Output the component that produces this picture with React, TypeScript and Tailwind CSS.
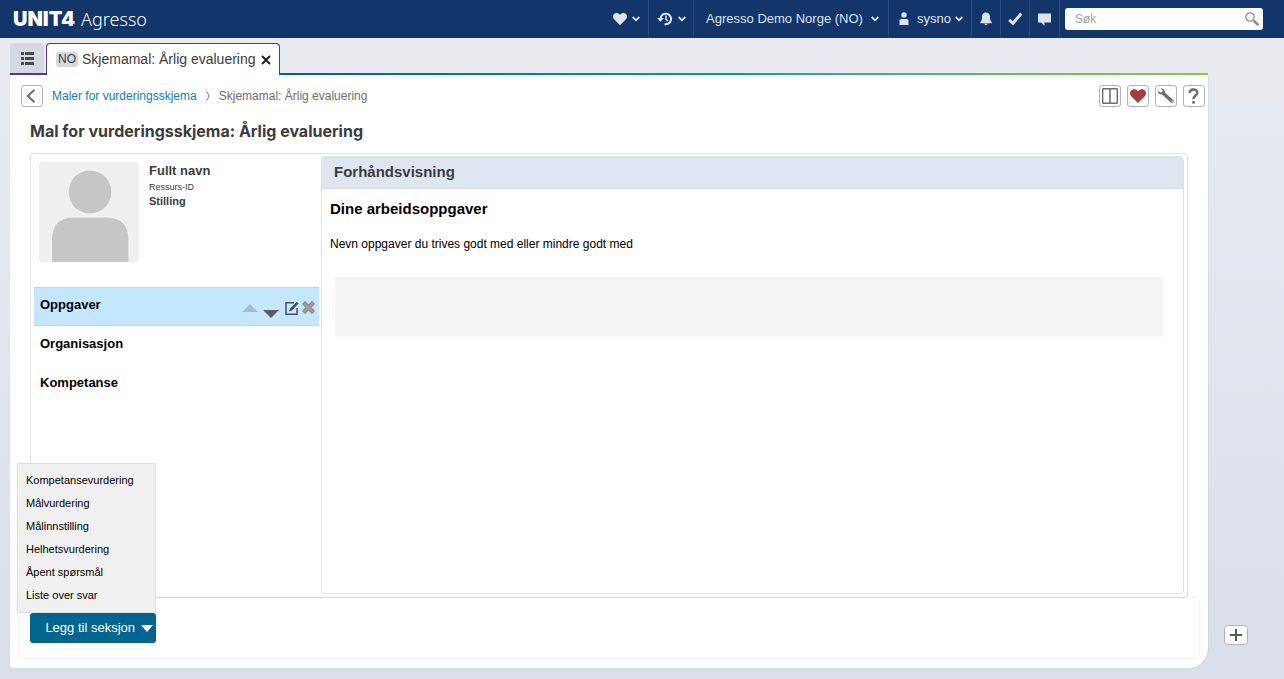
import type { ReactNode } from "react";

const menuItems = [
  "Kompetansevurdering",
  "Målvurdering",
  "Målinnstilling",
  "Helhetsvurdering",
  "Åpent spørsmål",
  "Liste over svar",
];

function Chevron() {
  return (
    <svg width="8" height="6" viewBox="0 0 8 6" fill="none" stroke="currentColor" strokeWidth="1.8">
      <path d="M0.7 1 4 4.3 7.3 1" />
    </svg>
  );
}

function HeartIcon({ size }: { size: number }) {
  return (
    <svg width={size} height={size} viewBox="0 0 16 16" fill="currentColor">
      <path d="M8 15 1.2 8.2C-.4 6.500-.4 3.900 1.100 2.400 2.800.7 5.700.6 8 3.200 10.300.6 13.200.7 14.900 2.400c1.500 1.500 1.500 4.100-.1 5.800z" />
    </svg>
  );
}

function HistoryIcon() {
  return (
    <svg width="16" height="14" viewBox="0 0 16 14" fill="none" stroke="currentColor" strokeWidth="2">
      <path d="M3.500 6.500a5.300 5.300 0 1 1 4 5.600" />
      <path d="M9 3.500v4l2 1.300" strokeWidth="1.500" />
      <path d="M0 6h7L3.400 9.800z" fill="currentColor" stroke="none" />
    </svg>
  );
}

function UserIcon() {
  return (
    <svg width="10" height="14" viewBox="0 0 10 14" fill="currentColor">
      <circle cx="5" cy="3" r="2.700" />
      <path d="M0.500 13V8.500Q0.500 7 2 7h6q1.500 0 1.500 1.500V13z" />
    </svg>
  );
}

function BellIcon() {
  return (
    <svg width="12" height="14" viewBox="0 0 12 14" fill="currentColor">
      <path d="M6 0.500c-2.600 0-4 1.800-4 4.200 0 2.800-.4 4.200-1.700 5.300v1.200h11.400V10C10.400 8.900 10 7.500 10 4.700 10 2.300 8.600.5 6 .5zM4.300 11.800h3.400Q7.200 13.200 6 13.200T4.300 11.800z" />
    </svg>
  );
}

function HeaderButton({ label, className, children }: { label?: string; className: string; children: ReactNode }) {
  return (
    <button
      type="button"
      aria-label={label}
      className={`flex items-center justify-center border-r border-[#2c4c7c] text-[13px] ${className}`}
    >
      {children}
    </button>
  );
}

function Header() {
  return (
    <header className="flex h-[38px] items-stretch bg-[#12356a] pl-[13px] pr-[21px] text-[#dde2ec]">
      <a href="#" className="mr-auto flex items-center gap-[6px] text-white">
        <span className="font-[Inter] text-[20px] font-black">UNIT4</span>
        <span className="font-['Noto_Sans'] text-[18px] font-light">Agresso</span>
      </a>
      <HeaderButton label="Favoritter" className="w-[45px] gap-[5px]">
        <HeartIcon size={14} />
        <Chevron />
      </HeaderButton>
      <HeaderButton label="Historikk" className="w-[45px] gap-[5px]">
        <HistoryIcon />
        <Chevron />
      </HeaderButton>
      <HeaderButton className="w-[195px] gap-2 pl-[3px]">
        Agresso Demo Norge (NO)
        <Chevron />
      </HeaderButton>
      <HeaderButton className="w-[83px] gap-1 pl-[2px]">
        <UserIcon />
        <span className="ml-1">sysno</span>
        <Chevron />
      </HeaderButton>
      <HeaderButton label="Varsler" className="w-[29px]">
        <BellIcon />
      </HeaderButton>
      <HeaderButton label="Oppgaver" className="w-[29px]">
        <svg width="15" height="14" viewBox="0 0 15 14" fill="none" stroke="currentColor" strokeWidth="3">
          <path d="M1.200 7.800 5 11.300 13.300 1.500" />
        </svg>
      </HeaderButton>
      <HeaderButton label="Meldinger" className="w-[30px]">
        <svg width="13" height="13" viewBox="0 0 13 13" fill="currentColor">
          <path d="M0 0.500h13v9H6.500v3.200L3 9.500H0z" />
        </svg>
      </HeaderButton>
      <label className="ml-[5px] flex h-[22px] w-[198px] items-center self-center rounded-[3px] bg-white pl-[10px] pr-1">
        <input
          type="text"
          aria-label="Søk"
          placeholder="Søk"
          className="min-w-0 flex-1 text-[12px] text-[#444] outline-none placeholder:text-[#a0a0a0]"
        />
        <svg width="14" height="14" viewBox="0 0 14 14" fill="none" stroke="#8c8c8c">
          <circle cx="5" cy="5" r="4.200" strokeWidth="1.300" />
          <path d="m8 8 1.500 1.500" strokeWidth="1.500" />
          <path d="m9 9 4.200 4" strokeWidth="2.600" />
        </svg>
      </label>
    </header>
  );
}

function Tabs() {
  return (
    <div className="flex items-end">
      <div className="h-8 border-b-2 border-[#5b3587] pr-[2px]">
        <button
          type="button"
          aria-label="Meny"
          className="flex h-[30px] w-[34px] items-center justify-center rounded-t-[4px] bg-[#d3d8e2] text-[#4a4a4a]"
        >
          <svg width="13" height="13" viewBox="0 0 13 13" fill="currentColor">
            <path d="M0 0h3v3H0zM4 0h9v3H4zM0 5h3v3H0zM4 5h9v3H4zM0 10h3v3H0zM4 10h9v3H4z" />
          </svg>
        </button>
      </div>
      <div className="flex h-8 items-center rounded-t-[4px] border-x border-t border-[#5b3587] bg-white pl-[9px] pr-2 text-[14px] text-[#3c3c3c]">
        <span className="mr-1 rounded-[3px] bg-[#d3d8e2] px-[2px] text-[12px] leading-[15px]">NO</span>
        Skjemamal: Årlig evaluering
        <button type="button" aria-label="Lukk fane" className="ml-[5px] text-[#222]">
          <svg width="10" height="10" viewBox="0 0 10 10" fill="none" stroke="currentColor" strokeWidth="2">
            <path d="m1 1 8 8M9 1 1 9" />
          </svg>
        </button>
      </div>
      <div className="h-[2px] flex-1 bg-linear-to-r from-[#005f9b] via-[#00a09f] via-50% to-[#98c33f]" />
    </div>
  );
}

function ToolButton({ label, children }: { label: string; children: ReactNode }) {
  return (
    <button
      type="button"
      aria-label={label}
      className="flex size-[22px] items-center justify-center rounded-[3px] border border-[#b4b4b4] bg-white text-[#6e6e6e]"
    >
      {children}
    </button>
  );
}

function Toolbar() {
  return (
    <div className="flex items-center pl-[11px] pr-[3px] pt-[10px]">
      <ToolButton label="Tilbake">
        <svg width="12" height="14" viewBox="0 0 12 14" fill="none" stroke="currentColor" strokeWidth="2">
          <path d="M8.500 0.800 1.800 7l6.700 6.200" />
        </svg>
      </ToolButton>
      <nav className="ml-[9px] flex items-center text-[12px] text-[#6e6e6e]">
        <a href="#" className="text-[#0a83b8]">
          Maler for vurderingsskjema
        </a>
        <svg className="mx-[9px]" width="4" height="10" viewBox="0 0 4 10" fill="none" stroke="currentColor">
          <path d="M0.500 0.500Q3 4 3 5T0.500 9.500" />
        </svg>
        <span>Skjemamal: Årlig evaluering</span>
      </nav>
      <div className="ml-auto flex gap-[6px]">
        <ToolButton label="Delt visning">
          <svg width="16" height="16" viewBox="0 0 16 16" fill="none" stroke="currentColor">
            <rect x="0.700" y="0.700" width="14.600" height="14.600" rx="0.500" strokeWidth="1.400" />
            <path d="M8 1v14" strokeWidth="1.600" />
          </svg>
        </ToolButton>
        <ToolButton label="Favoritt">
          <span className="text-[#a63c3c]">
            <HeartIcon size={16} />
          </span>
        </ToolButton>
        <ToolButton label="Verktøy">
          <svg width="18" height="16" viewBox="0 0 18 16" fill="currentColor">
            <path
              d="M3.400.5 5.600 2.300 5.200 4 3.200 4.500.8 2.900C.6 5 2.500 6.900 5.100 6.500L13.800 14.600c1.800 1.500 4.200-.9 2.500-2.700L8 4.700C8.200 1.700 5.800-.1 3.400.5zM15 12.700a.8.800 0 1 1 0 1.400.8.800 0 0 1 0-1.400z"
              fillRule="evenodd"
            />
          </svg>
        </ToolButton>
        <ToolButton label="Hjelp">
          <svg width="12" height="16" viewBox="0 0 12 16" fill="none" stroke="currentColor" strokeWidth="2.400">
            <path d="M1.700 5C1.700 0.400 9.300 0.400 9.300 4.700 9.300 7.700 5.500 7.300 5.500 11.300" />
            <path d="M4.200 13h2.600v2.600H4.200z" fill="currentColor" stroke="none" />
          </svg>
        </ToolButton>
      </div>
    </div>
  );
}

function Sections() {
  return (
    <aside className="flex w-[290px] shrink-0 flex-col">
      <div className="flex gap-[10px] px-2 pt-2">
        <svg className="rounded-[3px]" width="100" height="100" viewBox="0 0 100 100">
          <rect width="100" height="100" fill="#efefef" />
          <g fill="#c5c7c6" stroke="#f6f6f6">
            <circle cx="51" cy="30" r="22" />
            <path d="M12.500 101V78Q12.500 55 35 55H67Q90 55 90 78V101z" />
          </g>
        </svg>
        <div className="text-[#3c3c3c]">
          <p className="text-[13px] font-bold leading-[18px]">Fullt navn</p>
          <p className="text-[9px] leading-[14px]">Ressurs-ID</p>
          <p className="text-[11px] font-bold leading-[14px]">Stilling</p>
        </div>
      </div>
      <ul className="mt-[25px] pl-[3px] pr-[2px] text-[13px] font-bold text-black">
        <li className="flex h-[39px] items-center justify-between border-y border-[#c8d2d8] bg-[#c3e7ff] pl-[6px] pr-1">
          <span className="pb-1">Oppgaver</span>
          <div className="flex items-center gap-[3px] pt-[2px]">
            <button type="button" aria-label="Flytt opp" className="pr-[2px] text-[#a3bfce]">
              <svg width="16" height="8" viewBox="0 0 16 8" fill="currentColor">
                <path d="M0 8 8 0l8 8z" />
              </svg>
            </button>
            <button type="button" aria-label="Flytt ned" className="pr-[3px] pt-3 text-[#5c5c5c]">
              <svg width="16" height="8" viewBox="0 0 16 8" fill="currentColor">
                <path d="M0 0h16L8 8z" />
              </svg>
            </button>
            <button type="button" aria-label="Rediger" className="text-[#45525c]">
              <svg width="14" height="14" viewBox="0 0 14 14" fill="none" stroke="currentColor">
                <path d="M9 1.700H1v11.500h11V7" strokeWidth="1.500" />
                <path d="M4 10.500 5 7.600 11.700.8l1.800 1.800L7 9.400z" fill="currentColor" stroke="none" />
              </svg>
            </button>
            <button type="button" aria-label="Slett" className="text-[#a09b9b]">
              <svg width="13" height="13" viewBox="0 0 13 13" fill="none" stroke="currentColor">
                <path d="m1.500 1.500 10 10M11.500 1.500l-10 10" stroke="#858181" strokeWidth="4.400" />
                <path d="m2 2 9 9M11 2l-9 9" strokeWidth="3" />
              </svg>
            </button>
          </div>
        </li>
        <li className="flex h-[39px] items-center pb-1 pl-[6px]">Organisasjon</li>
        <li className="flex h-[39px] items-center pb-1 pl-[6px]">Kompetanse</li>
      </ul>
    </aside>
  );
}

function Preview() {
  return (
    <section className="mb-[3px] mr-[3px] mt-[2px] flex-1 overflow-hidden rounded-[4px] border border-[#e0e0e0]">
      <h2 className="flex h-8 items-center border-b border-[#dcdfe6] bg-[#dfe5f1] pl-3 text-[15px] font-bold text-[#3c3c3c]">
        Forhåndsvisning
      </h2>
      <h3 className="mt-[10px] pl-2 text-[15px] font-bold leading-5 text-black">Dine arbeidsoppgaver</h3>
      <label htmlFor="answer" className="mt-4 block pl-2 text-[12px] leading-[18px] text-black">
        Nevn oppgaver du trives godt med eller mindre godt med
      </label>
      <div className="pl-[13px] pr-5 pt-6">
        <textarea id="answer" className="block h-[60px] w-full resize-none rounded-[2px] bg-[#f5f5f5]" />
      </div>
    </section>
  );
}

function SectionMenu() {
  return (
    <div className="relative w-[126px]">
      <ul className="absolute bottom-full right-0 w-[139px] rounded-b-[3px] border border-[#dedede] bg-[#f0f0f0] py-[5px] text-[11px] leading-[23px] text-black">
        {menuItems.map((item) => (
          <li key={item}>
            <button type="button" className="block w-full pl-2 text-left">
              {item}
            </button>
          </li>
        ))}
      </ul>
      <button
        type="button"
        className="flex h-[30px] w-full items-center justify-end gap-[6px] rounded-[3px] bg-[#00658f] pr-[3px] text-[13px] text-white"
      >
        Legg til seksjon
        <svg width="12" height="7" viewBox="0 0 12 7" fill="currentColor">
          <path d="M0 0h12L6 7z" />
        </svg>
      </button>
    </div>
  );
}

export default function App() {
  return (
    <div className="flex min-h-screen flex-col bg-linear-to-b from-[#ececf0] via-[#e4e8f1] via-30% to-[#dadee9] font-['Liberation_Sans',sans-serif]">
      <Header />
      <div className="flex flex-1 pb-[11px] pl-[10px] pt-[5px]">
        <main className="flex flex-1 flex-col">
          <Tabs />
          <div className="flex flex-1 flex-col rounded-bl-[4px] rounded-br-[20px] bg-white pb-[10px] shadow-[1px_0_1px_rgba(0,0,0,0.06)]">
            <Toolbar />
            <h1 className="mb-[10px] ml-5 mt-3 font-[Inter] text-[16px] font-bold leading-6 text-[#3c3c3c]">
              Mal for vurderingsskjema: Årlig evaluering
            </h1>
            <div className="ml-5 mr-5 flex flex-1 rounded-[4px] border border-[#e0e0e0]">
              <Sections />
              <Preview />
            </div>
            <footer className="mx-[10px] bg-white px-[10px] pb-[15px] pt-[15px] shadow-[0_0_4px_rgba(0,0,0,0.1)]">
              <SectionMenu />
            </footer>
          </div>
        </main>
        <div className="flex w-[76px] items-end pb-[23px] pl-4">
          <button
            type="button"
            aria-label="Legg til"
            className="flex h-5 w-6 items-center justify-center rounded-[4px] border border-[#b4b4b4] bg-white text-[#5a5a5a]"
          >
            <svg width="12" height="12" viewBox="0 0 12 12" fill="currentColor">
              <path d="M5 0h2v5h5v2H7v5H5V7H0V5h5z" />
            </svg>
          </button>
        </div>
      </div>
    </div>
  );
}
